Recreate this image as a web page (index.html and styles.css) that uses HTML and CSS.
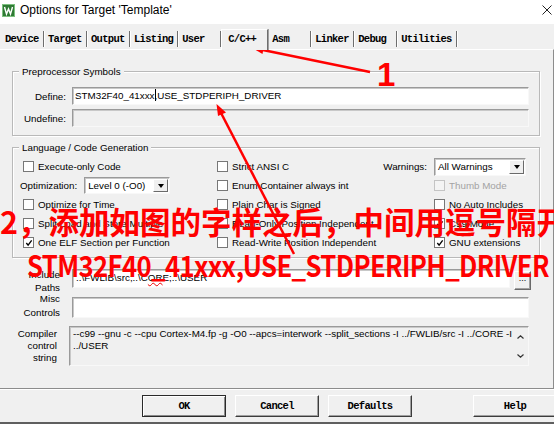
FILE: index.html
```html
<!DOCTYPE html>
<html lang="en">
<head>
  <meta charset="UTF-8">
  <title>Options for Target 'Template'</title>
  <link rel="stylesheet" href="styles.css">
</head>
<body>
  <div class="titlebar">
    <svg class="app-icon" viewBox="0 0 13 13">
      <rect x="0.5" y="0.5" width="12" height="12" fill="#2f7a34" stroke="#7cc17f"/>
      <path d="M2.5 3 L4.5 10 L6.5 5 L8.5 10 L10.5 3" fill="none" stroke="#fff" stroke-width="1.4"/>
    </svg>
    <span class="title">Options for Target 'Template'</span>
    <svg class="close" viewBox="0 0 10 10">
      <path d="M0.5 0.5 L9.5 9.5 M9.5 0.5 L0.5 9.5" stroke="#222" stroke-width="1"/>
    </svg>
  </div>

  <div class="tabs">
    <span class="tab">Device</span>
    <span class="tab">Target</span>
    <span class="tab">Output</span>
    <span class="tab">Listing</span>
    <span class="tab">User</span>
    <span class="tab active">C/C++</span>
    <span class="tab">Asm</span>
    <span class="tab">Linker</span>
    <span class="tab">Debug</span>
    <span class="tab">Utilities</span>
  </div>

  <div class="page">
    <div class="group pre">
      <div class="group-title">Preprocessor Symbols</div>
      <div class="field first">
        <label class="field-label">Define:</label>
        <div class="input">STM32F40_41xxx<span class="caret"></span>,USE_STDPERIPH_DRIVER</div>
      </div>
      <div class="field">
        <label class="field-label">Undefine:</label>
        <div class="input disabled"></div>
      </div>
    </div>

    <div class="group lang">
      <div class="group-title">Language / Code Generation</div>
      <div class="opts">
        <div class="opt"><span class="box"></span>Execute-only Code</div>
        <div class="opt"><span class="box"></span>Strict ANSI C<span class="warn-label">Warnings:</span></div>
        <div class="opt">
          <div class="select warn-select"><span class="select-text">All Warnings</span><span class="select-btn"><i class="tri"></i></span></div>
        </div>

        <div class="opt"><span class="opt-label">Optimization:</span>
          <div class="select opt-select"><span class="select-text">Level 0 (-O0)</span><span class="select-btn"><i class="tri"></i></span></div>
        </div>
        <div class="opt"><span class="box"></span>Enum Container always int</div>
        <div class="opt off"><span class="box"></span>Thumb Mode</div>

        <div class="opt"><span class="box"></span>Optimize for Time</div>
        <div class="opt"><span class="box"></span>Plain Char is Signed</div>
        <div class="opt"><span class="box"></span>No Auto Includes</div>

        <div class="opt"><span class="box"></span>Split Load and Store Multiple</div>
        <div class="opt"><span class="box"></span>Read-Only Position Independent</div>
        <div class="opt"><span class="box checked"><svg viewBox="0 0 9 9"><path d="M1.5 4.5 L3.5 7 L7.5 1.5" fill="none" stroke="#000" stroke-width="1.5"/></svg></span>C99 Mode</div>

        <div class="opt"><span class="box checked"><svg viewBox="0 0 9 9"><path d="M1.5 4.5 L3.5 7 L7.5 1.5" fill="none" stroke="#000" stroke-width="1.5"/></svg></span>One ELF Section per Function</div>
        <div class="opt"><span class="box"></span>Read-Write Position Independent</div>
        <div class="opt"><span class="box checked"><svg viewBox="0 0 9 9"><path d="M1.5 4.5 L3.5 7 L7.5 1.5" fill="none" stroke="#000" stroke-width="1.5"/></svg></span>GNU extensions</div>
      </div>
    </div>

    <div class="row row-include">
      <div class="row-label">Include<br>Paths</div>
      <div class="input include">..\FWLIB\src;..\C<span class="typo">OR</span>E;..\USER</div>
      <div class="browse">...</div>
    </div>
    <div class="row row-misc">
      <div class="row-label">Misc<br>Controls</div>
      <div class="input misc"></div>
    </div>
    <div class="row row-compiler">
      <div class="row-label">Compiler<br>control<br>string</div>
      <div class="textarea">
        <div class="textarea-text">--c99 --gnu -c --cpu Cortex-M4.fp -g -O0 --apcs=interwork --split_sections -I ../FWLIB/src -I ../CORE -I<br>../USER</div>
        <div class="scroll">
          <svg viewBox="0 0 7 4"><path d="M0.5 3.5 L3.5 0.8 L6.5 3.5" fill="none" stroke="#333" stroke-width="1.2"/></svg>
          <svg viewBox="0 0 7 4"><path d="M0.5 0.5 L3.5 3.2 L6.5 0.5" fill="none" stroke="#333" stroke-width="1.2"/></svg>
        </div>
      </div>
    </div>
  </div>

  <div class="actions">
    <button class="btn default">OK</button>
    <button class="btn">Cancel</button>
    <button class="btn">Defaults</button>
    <button class="btn help">Help</button>
  </div>
  <div class="frame-bottom"></div>

  <svg class="marks" viewBox="0 0 554 424">
    <line x1="258" y1="49" x2="370" y2="72" stroke="#f00" stroke-width="2.5"/>
    <polygon points="252,47.8 264,46 262.5,54" fill="#f00"/>
    <line x1="220" y1="111" x2="294" y2="254" stroke="#f00" stroke-width="2.5"/>
    <polygon points="216.5,104 226,112.5 218,116" fill="#f00"/>
  </svg>
  <div class="note note-one">1</div>
  <div class="note note-step">2，添加如图的字样之后，中间用逗号隔开</div>
  <div class="note note-define">STM32F40_41xxx,USE_STDPERIPH_DRIVER</div>
</body>
</html>
```

FILE: styles.css
```css
* {
  margin: 0;
  padding: 0;
  box-sizing: border-box;
}

body {
  position: relative;
  width: 554px;
  height: 424px;
  overflow: hidden;
  background-color: #f0f0f0;
  font-family: "Liberation Sans", Arial, sans-serif;
  font-size: 9.8px;
  color: #000;
}

/* title bar */
.titlebar {
  height: 24px;
  display: flex;
  align-items: center;
  padding: 0 0 4px 2px;
  background-color: #fff;
}

.app-icon {
  width: 13px;
  height: 13px;
}

.title {
  margin-left: 5px;
  font-size: 12px;
}

.close {
  width: 10px;
  height: 10px;
  margin-left: auto;
  margin-right: 2px;
}

/* tabs */
.tabs {
  height: 25px;
  display: flex;
  align-items: flex-end;
  padding-left: 1px;
  font-family: "Liberation Mono", monospace;
  font-size: 10.5px;
  letter-spacing: -0.7px;
  font-weight: bold;
}

.tab {
  height: 16px;
  min-width: 43px;
  margin-bottom: 2px;
  padding: 0 4px;
  line-height: 16px;
  border-right: 1px solid #6e6e6e;
  box-shadow: 1px 0 0 #fff;
  white-space: pre;
}

.tab.active {
  position: relative;
  z-index: 1;
  height: 21px;
  min-width: 47px;
  margin: 0 0 -1px 0;
  padding: 1px 6px 0 6px;
  background-color: #f0f0f0;
  border-top: 1px solid #fff;
  border-left: 1px solid #fff;
  box-shadow: 1px 0 0 #a0a0a0;
}

/* tab page */
.page {
  height: 340px;
  padding: 21px 13px 0 12px;
  border-top: 1px solid #fff;
  border-right: 1px solid #8c8c8c;
  border-bottom: 1px solid #8c8c8c;
  box-shadow: 0 1px 0 #fff;
}

.group {
  border: 1px solid #b9b9b9;
  box-shadow: inset 1px 1px 0 #fff, 1px 1px 0 #fff;
}

.group-title {
  display: table;
  margin: -7px 0 0 6px;
  padding: 0 3px;
  line-height: 13px;
  background-color: #f0f0f0;
}

.pre {
  padding: 0 10px 8px 0;
}

.field {
  display: flex;
  align-items: center;
  margin-top: 4px;
}

.field.first {
  margin-top: 9px;
}

.field-label {
  width: 53px;
  margin-right: 6px;
  text-align: right;
}

.input {
  flex: 1;
  height: 18px;
  padding-left: 2px;
  line-height: 16px;
  background-color: #fff;
  border: 1px solid;
  border-color: #9a9a9a #f8f8f8 #f8f8f8 #9a9a9a;
  box-shadow: inset 1px 1px 0 #c8c8c8;
  white-space: pre;
}

.input.disabled {
  background-color: #f0f0f0;
}

.caret {
  display: inline-block;
  width: 1px;
  height: 12px;
  margin-right: -1px;
  vertical-align: -2px;
  background-color: #000;
}

.lang {
  margin-top: 11px;
  padding-bottom: 5px;
}

.opts {
  display: grid;
  grid-template-columns: 194px 217px 1fr;
  grid-auto-rows: 19px;
  margin-top: 3px;
  padding: 0 12px 0 10px;
}

.opt {
  display: flex;
  align-items: center;
  white-space: nowrap;
}

.opt.off {
  color: #a3a3a3;
}

.box {
  width: 11px;
  height: 11px;
  margin-right: 4px;
  display: flex;
  align-items: center;
  justify-content: center;
  background-color: #fff;
  border: 1px solid #777;
}

.opt.off .box {
  border-color: #c4c4c4;
  background-color: #f4f4f4;
}

.box svg {
  width: 8px;
  height: 8px;
}

.warn-label {
  margin-left: auto;
  margin-right: 7px;
}

.opt-label {
  margin-left: -3px;
  margin-right: 7px;
}

.select {
  height: 18px;
  display: flex;
  background-color: #fff;
  border: 1px solid;
  border-color: #9a9a9a #f8f8f8 #f8f8f8 #9a9a9a;
  box-shadow: inset 1px 1px 0 #c8c8c8;
}

.warn-select {
  width: 92px;
}

.opt-select {
  width: 86px;
  height: 17px;
}

.select-text {
  flex: 1;
  padding-left: 3px;
  line-height: 15px;
}

.select-btn {
  width: 15px;
  margin: 1px;
  display: flex;
  align-items: center;
  justify-content: center;
  background-color: #f0f0f0;
  border: 1px solid;
  border-color: #fff #6a6a6a #6a6a6a #fff;
}

.tri {
  width: 0;
  height: 0;
  border-top: 4px solid #000;
  border-left: 3.5px solid transparent;
  border-right: 3.5px solid transparent;
}

/* lower fields */
.row {
  display: flex;
  align-items: flex-start;
}

.row-label {
  width: 48px;
  margin-right: 12px;
  line-height: 13px;
  text-align: right;
}

.row-include {
  height: 24px;
  margin-top: 10px;
}

.row-include .input {
  flex: none;
  width: 438px;
  height: 19px;
  margin-top: 1px;
  padding-left: 3px;
}

.typo {
  text-decoration: underline wavy #e00;
  text-decoration-thickness: 1px;
}

.browse {
  width: 17px;
  height: 19px;
  margin: 3px 0 0 4px;
  font-size: 9px;
  line-height: 12px;
  text-align: center;
  border: 1px solid;
  border-color: #fff #6a6a6a #6a6a6a #fff;
  box-shadow: inset -1px -1px 0 #a0a0a0;
}

.row-misc {
  height: 30px;
}

.row-misc .row-label {
  line-height: 14px;
}

.input.misc {
  height: 21px;
  margin: 5px 11px 0 0;
}

.row-compiler {
  margin-top: 4px;
}

.row-compiler .row-label {
  margin-top: 2px;
  line-height: 12px;
}

.textarea {
  flex: 1;
  height: 40px;
  margin-right: 11px;
  display: flex;
  background-color: #f0f0f0;
  border: 1px solid;
  border-color: #9a9a9a #f8f8f8 #f8f8f8 #9a9a9a;
  box-shadow: inset 1px 1px 0 #c8c8c8;
}

.textarea-text {
  flex: 1;
  padding: 1px 0 0 3px;
  line-height: 12px;
  white-space: nowrap;
}

.scroll {
  width: 16px;
  display: flex;
  flex-direction: column;
  justify-content: space-between;
  align-items: center;
  padding: 8px 0 7px;
}

.scroll svg {
  width: 7px;
  height: 4px;
}

/* buttons */
.actions {
  height: 33px;
  display: flex;
  align-items: flex-start;
  gap: 9px;
  padding: 6px 0 0 142px;
}

.btn {
  flex: none;
  width: 84px;
  height: 22px;
  font-family: "Liberation Mono", monospace;
  font-size: 10.5px;
  letter-spacing: -0.7px;
  font-weight: bold;
  color: #000;
  background-color: #f0f0f0;
  border: 1px solid;
  border-color: #fff #3c3c3c #3c3c3c #fff;
  box-shadow: inset -1px -1px 0 #a0a0a0;
}

.btn.default {
  border-color: #2a2a2a;
  box-shadow: inset 1px 1px 0 #fff, inset -1px -1px 0 #8a8a8a;
}

.btn.help {
  margin-left: 52px;
}

.frame-bottom {
  height: 2px;
  background-color: #5f5f5f;
}

/* red annotations laid over the dialog */
.marks {
  position: absolute;
  top: 0;
  left: 0;
  width: 554px;
  height: 424px;
}

.note {
  position: absolute;
  color: #f00;
  font-weight: bold;
  white-space: nowrap;
}

.note-one {
  top: 58px;
  left: 377px;
  font-family: "Liberation Sans", Arial, sans-serif;
  font-size: 33px;
  line-height: 33px;
}

.note-step {
  top: 206px;
  left: 0;
  font-family: "Noto Sans CJK SC", "Noto Sans", sans-serif;
  font-size: 30.5px;
  line-height: 30px;
}

.note-define {
  top: 250px;
  left: 27px;
  font-family: "Noto Sans CJK SC", "Noto Sans", sans-serif;
  font-size: 29px;
  line-height: 29px;
  letter-spacing: -0.7px;
  transform: scaleX(0.885);
  transform-origin: left top;
}
```
